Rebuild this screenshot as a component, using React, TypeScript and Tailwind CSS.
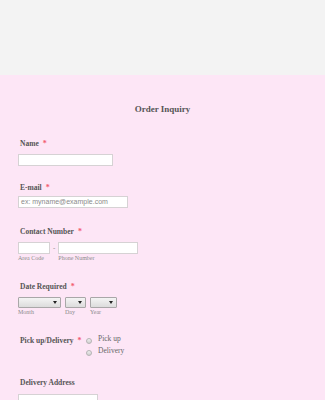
const serif = { fontFamily: '"Liberation Serif", "Times New Roman", serif' }

function Label({ text, required = true, className = '' }: { text: string; required?: boolean; className?: string }) {
  return (
    <div className={`ml-[2px] flex h-[10px] items-center text-[7.5px] leading-[10px] font-bold text-[#555555] ${className}`}>
      <span>{text}</span>
      {required && <span className='ml-[4px] text-[8px] text-[#f25a6e]'>*</span>}
    </div>
  )
}

function Input({ className = '', placeholder }: { className?: string; placeholder?: string }) {
  return (
    <div
      className={`flex items-center border border-[#d6d2d4] bg-white pl-[2px] text-[7px] text-[#8a8a8a] ${className}`}
      style={{ fontFamily: '"Liberation Sans", Arial, sans-serif' }}
    >
      {placeholder}
    </div>
  )
}

function Select({ width }: { width: string }) {
  return (
    <div className={`relative h-[11px] ${width} rounded-[1px] border border-[#a9a7a8] bg-gradient-to-b from-[#f4f4f4] to-[#dcdcdc]`}>
      <span className='absolute top-[3px] right-[3px] h-0 w-0 border-x-[2.5px] border-t-[3.5px] border-x-transparent border-t-[#222222]' />
    </div>
  )
}

function Sub({ children, className = '' }: { children: string; className?: string }) {
  return <span className={`text-[6px] leading-[7px] text-[#8c8c8c] ${className}`}>{children}</span>
}

function Radio({ label }: { label: string }) {
  return (
    <div className='flex h-[12px] items-center'>
      <span className='mt-[3px] h-[6px] w-[6px] rounded-full border border-[#b5b3b4] bg-gradient-to-b from-[#f0f0f0] to-[#d0d0d0]' />
      <span className='ml-[6px] text-[7.5px] leading-[10px] text-[#666666]'>{label}</span>
    </div>
  )
}

export default function App() {
  return (
    <div className='h-[400px] w-[325px] overflow-hidden' style={serif}>
      <div className='h-[75px] bg-[#f3f3f3]' />
      <div className='flex h-[325px] flex-col bg-[#fde6f6]'>
        <h1 className='mt-[28px] h-[12px] text-center text-[9px] leading-[12px] font-bold text-[#555555]'>Order Inquiry</h1>
        <div className='mt-[12px] mr-[17px] ml-[18px] h-px bg-[#eedde8]' />

        <div className='flex flex-col pl-[18px]'>
          <Label text='Name' className='mt-[12px]' />
          <Input className='mt-[5px] h-[12px] w-[95px]' />

          <Label text='E-mail' className='mt-[17px]' />
          <Input className='mt-[3px] h-[12px] w-[110px]' placeholder='ex: myname@example.com' />

          <Label text='Contact Number' className='mt-[19px]' />
          <div className='mt-[5px] flex items-start'>
            <div className='flex flex-col'>
              <Input className='h-[12px] w-[32px]' />
              <Sub className='mt-px'>Area Code</Sub>
            </div>
            <span className='mx-[3px] mt-[2px] text-[7px] leading-[8px] text-[#777777]'>-</span>
            <div className='flex flex-col'>
              <Input className='h-[12px] w-[80px]' />
              <Sub className='mt-px'>Phone Number</Sub>
            </div>
          </div>

          <Label text='Date Required' className='mt-[20px]' />
          <div className='mt-[5px] flex items-start gap-[4px]'>
            <div className='flex flex-col'>
              <Select width='w-[43px]' />
              <Sub className='mt-px'>Month</Sub>
            </div>
            <div className='flex flex-col'>
              <Select width='w-[21px]' />
              <Sub className='mt-px'>Day</Sub>
            </div>
            <div className='flex flex-col'>
              <Select width='w-[27px]' />
              <Sub className='mt-px'>Year</Sub>
            </div>
          </div>

          <div className='mt-[20px] flex items-start'>
            <div className='w-[68px]'>
              <Label text='Pick up/Delivery' />
            </div>
            <div className='-mt-[3px] flex flex-col'>
              <Radio label='Pick up' />
              <Radio label='Delivery' />
            </div>
          </div>

          <Label text='Delivery Address' required={false} className='mt-[21px]' />
          <Input className='mt-[6px] h-[12px] w-[80px]' />
        </div>
      </div>
    </div>
  )
}
